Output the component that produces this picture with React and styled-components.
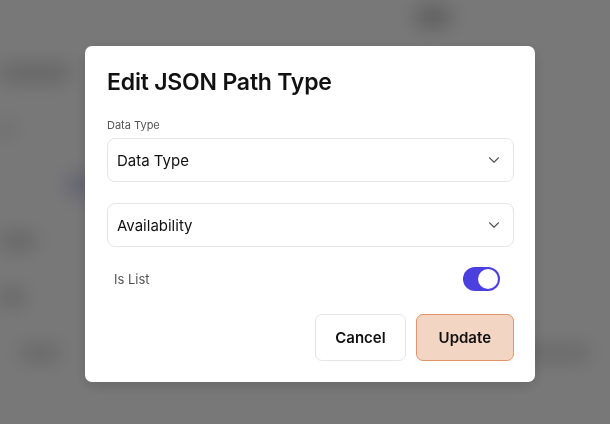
import React, { useState } from "react";
import styled, { createGlobalStyle } from "styled-components";
import { ChevronDown } from "lucide-react";

const GlobalStyle = createGlobalStyle`
    html, body {
        margin: 0;
        padding: 0;
        width: 100%;
        height: 100%;
        overflow: hidden;
        font-family: Inter, "Noto Sans", sans-serif;
    }
    #root {
        height: 100%;
    }
`;

// the page behind the dialog, blurred out
const Page = styled.div`
    height: 100%;
    background: #fff;
    filter: blur(10px);
    display: flex;
    flex-direction: column;
    padding: 8px 0 0 0;
    gap: 38px;
`;

const PageRow = styled.div`
    display: flex;
    align-items: center;
    justify-content: space-between;
    padding: 0 ${(p) => p.pad || 0}px;
    height: 18px;
`;

const Blob = styled.div`
    width: ${(p) => p.w}px;
    height: ${(p) => p.h || 14}px;
    background: ${(p) => p.color || "#c4c4c4"};
    border-radius: 6px;
    margin-left: ${(p) => p.ml || 0}px;
    margin-right: ${(p) => p.mr || 0}px;
`;

const Overlay = styled.div`
    position: fixed;
    inset: 0;
    background: rgba(0, 0, 0, 0.53);
    display: flex;
    align-items: center;
    justify-content: center;
    padding: 4px 0 0 10px;
`;

const Modal = styled.div`
    width: 450px;
    box-sizing: border-box;
    background: #fff;
    border-radius: 7px;
    padding: 21px 21px 21px 22px;
    box-shadow: 0 4px 14px rgba(0, 0, 0, 0.15);
    display: flex;
    flex-direction: column;
`;

const Title = styled.h2`
    margin: 0 0 21px 0;
    font-size: 23px;
    line-height: 30px;
    font-weight: 600;
    color: #111;
    letter-spacing: -0.2px;
`;

const Label = styled.label`
    font-size: 11px;
    line-height: 14px;
    color: #555;
    margin-bottom: 6px;
`;

const Select = styled.div`
    height: 44px;
    box-sizing: border-box;
    border: 1px solid #e6e6e6;
    border-radius: 8px;
    display: flex;
    align-items: center;
    justify-content: space-between;
    padding: 0 10px 0 9px;
    font-size: 15px;
    color: #111;
    margin-bottom: ${(p) => p.mb || 0}px;
    cursor: pointer;
`;

const Chevron = styled(ChevronDown)`
    color: #555;
`;

const SwitchRow = styled.div`
    display: flex;
    align-items: center;
    justify-content: space-between;
    padding: 0 14px 0 7px;
    margin-top: 20px;
    height: 24px;
`;

const SwitchLabel = styled.span`
    font-size: 13px;
    color: #555;
`;

const Track = styled.button`
    width: 37px;
    height: 24px;
    border-radius: 12px;
    border: none;
    padding: 2px;
    background: ${(p) => (p.$on ? "#4b3fe0" : "#ccc")};
    display: flex;
    justify-content: ${(p) => (p.$on ? "flex-end" : "flex-start")};
    cursor: pointer;
`;

const Knob = styled.span`
    width: 20px;
    height: 20px;
    border-radius: 50%;
    background: #fff;
`;

const Actions = styled.div`
    display: flex;
    justify-content: flex-end;
    gap: 10px;
    margin-top: 23px;
`;

const Button = styled.button`
    height: 47px;
    padding: 0 ${(p) => (p.$primary ? 22 : 19)}px;
    border-radius: 7px;
    border: 1px solid ${(p) => (p.$primary ? "#e39468" : "#e6e6e6")};
    background: ${(p) => (p.$primary ? "#f2d5c3" : "#fff")};
    font-family: inherit;
    font-size: 15px;
    font-weight: 600;
    color: #111;
    cursor: pointer;
`;

const App = () => {
    const [isList, setIsList] = useState(true);

    return (
        <>
            <GlobalStyle />
            <Page>
                <PageRow>
                    <span />
                    <Blob w={34} h={18} color="#bdbdbd" mr={160} />
                </PageRow>
                <PageRow>
                    <Blob w={70} color="#cbcbcb" />
                </PageRow>
                <PageRow>
                    <Blob w={12} color="#d2d2d2" />
                </PageRow>
                <PageRow>
                    <Blob w={18} h={20} color="#bcb8ea" ml={70} />
                </PageRow>
                <PageRow>
                    <Blob w={36} color="#cdcdcd" />
                </PageRow>
                <PageRow>
                    <Blob w={24} color="#c9c9c9" />
                </PageRow>
                <PageRow pad={20}>
                    <Blob w={40} color="#d4d4d4" />
                    <Blob w={40} color="#d4d4d4" />
                    <Blob w={120} color="#d8d8d8" />
                </PageRow>
            </Page>
            <Overlay>
                <Modal>
                    <Title>Edit JSON Path Type</Title>
                    <Label>Data Type</Label>
                    <Select mb={21}>
                        Data Type
                        <Chevron size={18} strokeWidth={1.5} />
                    </Select>
                    <Select>
                        Availability
                        <Chevron size={18} strokeWidth={1.5} />
                    </Select>
                    <SwitchRow>
                        <SwitchLabel>Is List</SwitchLabel>
                        <Track $on={isList} onClick={() => setIsList(!isList)}>
                            <Knob />
                        </Track>
                    </SwitchRow>
                    <Actions>
                        <Button>Cancel</Button>
                        <Button $primary>Update</Button>
                    </Actions>
                </Modal>
            </Overlay>
        </>
    );
};

export default App;
